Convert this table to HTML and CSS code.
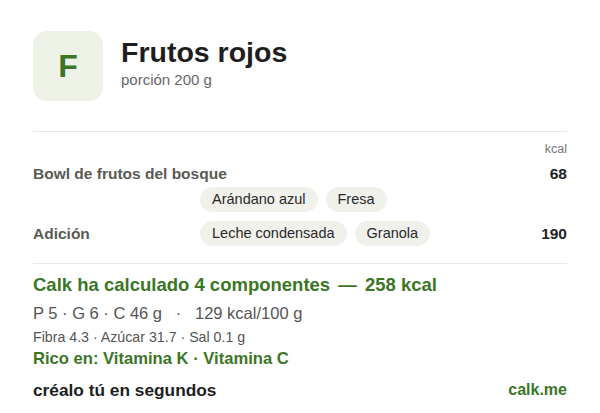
FILE: index.html
```html
<!DOCTYPE html>
<html lang="es">
<head>
  <meta charset="UTF-8">
  <title>Frutos rojos - Calk</title>
  <link rel="stylesheet" href="styles.css">
</head>
<body>
  <div class="card">
    <div class="header">
      <div class="avatar">F</div>
      <div class="titles">
        <h1>Frutos rojos</h1>
        <p class="portion">porción 200 g</p>
      </div>
    </div>

    <div class="items">
      <div class="unit">kcal</div>

      <div class="group">
        <div class="group-line">
          <span class="group-name">Bowl de frutos del bosque</span>
          <span class="kcal">68</span>
        </div>
        <div class="chips indent">
          <span class="chip">Arándano azul</span>
          <span class="chip">Fresa</span>
        </div>
      </div>

      <div class="group inline">
        <span class="group-name name-col">Adición</span>
        <div class="chips">
          <span class="chip">Leche condensada</span>
          <span class="chip">Granola</span>
        </div>
        <span class="kcal">190</span>
      </div>
    </div>

    <div class="summary">
      <p class="total">Calk ha calculado 4 componentes <span class="dash">—</span> 258 kcal</p>
      <p class="macros">P 5 · G 6 · C 46 g &nbsp; · &nbsp; 129 kcal/100 g</p>
      <p class="extras">Fibra 4.3 · Azúcar 31.7 · Sal 0.1 g</p>
      <p class="rich">Rico en: Vitamina K · Vitamina C</p>
    </div>

    <div class="footer">
      <span class="cta">créalo tú en segundos</span>
      <span class="brand">calk.me</span>
    </div>
  </div>
</body>
</html>
```

FILE: styles.css
```css
body {
  font-family: 'Liberation Sans', Arial, sans-serif;
  background-color: #fff;
  color: #222;
  margin: 0;
}
.card {
  padding: 31px 33px 0;
}
.header {
  display: flex;
  align-items: flex-start;
  gap: 18px;
  padding-bottom: 30px;
  border-bottom: 1px solid #e8e8e6;
}
.avatar {
  width: 70px;
  height: 70px;
  border-radius: 14px;
  background-color: #eef1e6;
  color: #3b7626;
  font-weight: bold;
  font-size: 32px;
  display: flex;
  align-items: center;
  justify-content: center;
}
.titles {
  padding-top: 5px;
}
.titles h1 {
  margin: 0;
  font-size: 28.5px;
  line-height: 32px;
  color: #1e1e1e;
}
.portion {
  margin: 3px 0 0;
  font-size: 15px;
  line-height: 18px;
  color: #666;
}
.items {
  padding: 10px 0 17px;
  border-bottom: 1px solid #e8e8e6;
}
.unit {
  text-align: right;
  font-size: 12.5px;
  color: #777;
  line-height: 15px;
}
.group-line {
  display: flex;
  justify-content: space-between;
  align-items: center;
  margin-top: 8px;
  line-height: 18px;
}
.group-name {
  font-weight: bold;
  font-size: 15.5px;
  color: #5a5a52;
}
.kcal {
  font-weight: bold;
  font-size: 15.5px;
  color: #222;
}
.chips {
  display: flex;
  gap: 8px;
}
.indent {
  padding-left: 167px;
  margin-top: 4px;
}
.group.inline {
  display: flex;
  align-items: center;
  margin-top: 9px;
}
.name-col {
  width: 167px;
}
.inline .chips {
  flex: 1;
}
.chip {
  background-color: #f1f1ec;
  border-radius: 13px;
  padding: 0 12px;
  height: 25px;
  line-height: 25px;
  font-size: 14.5px;
  color: #2a2a2a;
}
.summary p {
  margin: 0;
}
.total {
  margin-top: 9px !important;
  font-size: 18.5px;
  font-weight: bold;
  color: #3b7626;
  line-height: 24px;
}
.dash {
  margin: 0 3px;
}
.macros {
  margin-top: 6px !important;
  font-size: 16.5px;
  color: #555;
  line-height: 20px;
}
.extras {
  margin-top: 5px !important;
  font-size: 14.2px;
  color: #555;
  line-height: 18px;
}
.rich {
  margin-top: 3px !important;
  font-size: 16.6px;
  font-weight: bold;
  color: #3b7626;
  line-height: 20px;
}
.footer {
  display: flex;
  justify-content: space-between;
  align-items: center;
  margin-top: 11px;
  font-weight: bold;
  line-height: 20px;
}
.cta {
  font-size: 17.3px;
  color: #1e1e1e;
}
.brand {
  font-size: 16px;
  color: #3b7626;
}
```
